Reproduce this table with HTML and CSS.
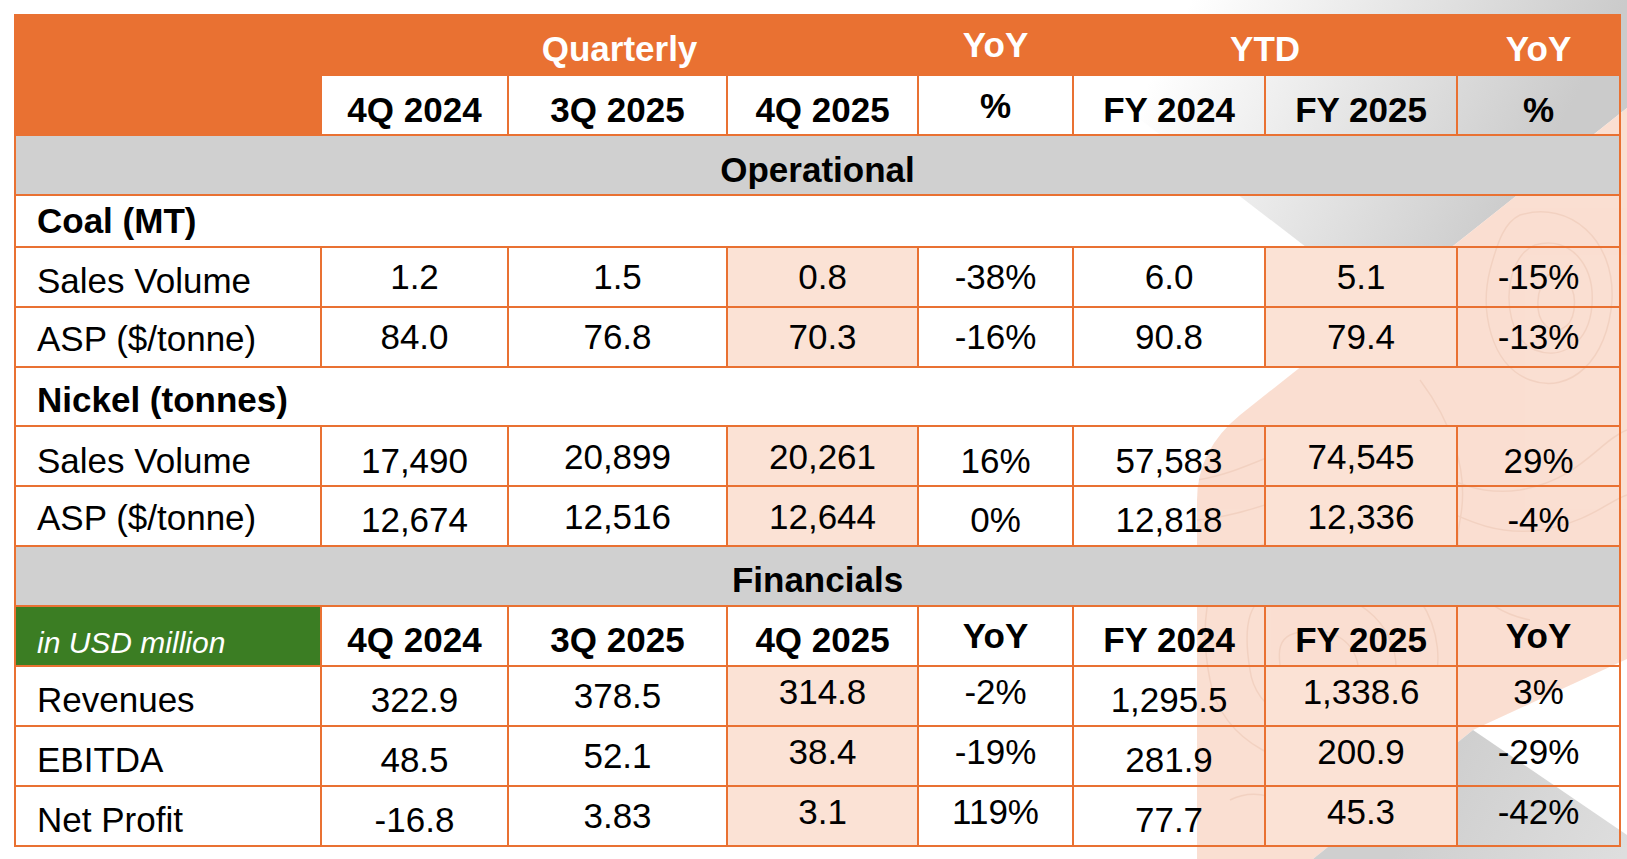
FILE: index.html
```html
<!DOCTYPE html>
<html lang="en">
<head>
<meta charset="utf-8">
<title>Operational and Financial Highlights</title>
<link rel="stylesheet" href="styles.css">
</head>
<body>
<div class="page">
  <svg class="deco" width="1627" height="859" viewBox="0 0 1627 859" aria-hidden="true">
    <defs>
      <linearGradient id="gTop" gradientUnits="userSpaceOnUse" x1="1160" y1="60" x2="1500" y2="240">
        <stop offset="0" stop-color="#ffffff"/>
        <stop offset="1" stop-color="#cbcbcb"/>
      </linearGradient>
      <linearGradient id="gBot" gradientUnits="userSpaceOnUse" x1="1450" y1="760" x2="1620" y2="859">
        <stop offset="0" stop-color="#cfcfcf"/>
        <stop offset="1" stop-color="#dedede"/>
      </linearGradient>
      <clipPath id="peachClip">
        <path d="M1627,108 L1240,415 Q1197,450 1197,500 L1197,859 L1313,859 L1473,730 L1627,659 Z"/>
      </clipPath>
    </defs>
    <polygon points="985,0 1627,0 1627,108 1380,304" fill="url(#gTop)"/>
    <path d="M1627,108 L1240,415 Q1197,450 1197,500 L1197,859 L1313,859 L1473,730 L1627,659 Z" fill="#FADFD2"/>
    <g clip-path="url(#peachClip)" fill="none" stroke="#E2B49C" stroke-width="1.5" opacity="0.3">
      <path d="M1520,215 C1570,200 1615,240 1612,300 C1608,360 1570,395 1530,380 C1490,365 1480,310 1490,270 C1498,240 1505,222 1520,215 Z"/>
      <path d="M1535,245 C1570,235 1595,265 1592,305 C1589,345 1560,360 1535,350 C1510,340 1505,300 1512,275 C1517,258 1525,249 1535,245 Z"/>
      <path d="M1548,275 C1565,270 1577,288 1574,310 C1571,330 1555,335 1545,325 C1535,315 1535,290 1548,275 Z"/>
      <path d="M1230,560 C1290,520 1380,540 1420,600 C1460,660 1430,740 1360,760 C1290,780 1220,740 1210,680 C1200,630 1205,580 1230,560 Z"/>
      <path d="M1260,600 C1300,580 1360,590 1385,630 C1410,670 1390,715 1345,725 C1300,735 1255,710 1250,670 C1245,640 1245,612 1260,600 Z"/>
      <path d="M1290,635 C1315,625 1345,632 1355,655 C1365,678 1350,695 1325,698 C1300,700 1282,685 1280,665 C1278,650 1280,640 1290,635 Z"/>
      <path d="M1197,480 C1260,470 1300,430 1360,440 C1420,450 1450,500 1520,490 C1580,480 1600,440 1627,430"/>
      <path d="M1197,520 C1260,515 1310,480 1370,485 C1430,490 1470,540 1540,530 C1590,522 1610,500 1627,495"/>
      <path d="M1420,380 C1450,420 1470,470 1460,520 C1450,570 1480,610 1530,620"/>
      <path d="M1230,800 C1270,780 1300,820 1340,810 C1380,800 1400,760 1440,770"/>
      <path d="M1480,560 C1520,540 1570,560 1590,600"/>
    </g>
    <polygon points="1473,730 1627,835 1627,859 1313,859" fill="url(#gBot)"/>
  </svg>

  <table class="kpi">
    <colgroup>
      <col class="c0"><col class="c1"><col class="c2"><col class="c3">
      <col class="c4"><col class="c5"><col class="c6"><col class="c7">
    </colgroup>
    <tr class="h1">
      <th class="corner" rowspan="2"></th>
      <th colspan="3" class="d4">Quarterly</th>
      <th>YoY</th>
      <th colspan="2" class="d4">YTD</th>
      <th class="d4">YoY</th>
    </tr>
    <tr class="h2">
      <th class="d5">4Q 2024</th>
      <th class="d5">3Q 2025</th>
      <th class="d5">4Q 2025</th>
      <th class="d1">%</th>
      <th class="d5">FY 2024</th>
      <th class="d5">FY 2025</th>
      <th class="d5">%</th>
    </tr>
    <tr class="sec">
      <td colspan="8" class="d5">Operational</td>
    </tr>
    <tr class="grp coal">
      <td colspan="8">Coal (MT)</td>
    </tr>
    <tr>
      <td class="lbl d4">Sales Volume</td>
      <td>1.2</td>
      <td>1.5</td>
      <td class="hl">0.8</td>
      <td>-38%</td>
      <td>6.0</td>
      <td class="hl">5.1</td>
      <td>-15%</td>
    </tr>
    <tr>
      <td class="lbl d2">ASP ($/tonne)</td>
      <td>84.0</td>
      <td>76.8</td>
      <td class="hl">70.3</td>
      <td>-16%</td>
      <td>90.8</td>
      <td class="hl">79.4</td>
      <td>-13%</td>
    </tr>
    <tr class="grp nickel">
      <td colspan="8" class="d4">Nickel (tonnes)</td>
    </tr>
    <tr>
      <td class="lbl d5">Sales Volume</td>
      <td class="d5">17,490</td>
      <td class="d1">20,899</td>
      <td class="hl d1">20,261</td>
      <td class="d5">16%</td>
      <td class="d5">57,583</td>
      <td class="hl d1">74,545</td>
      <td class="d5">29%</td>
    </tr>
    <tr>
      <td class="lbl d2">ASP ($/tonne)</td>
      <td class="d4">12,674</td>
      <td class="d1">12,516</td>
      <td class="hl d1">12,644</td>
      <td class="d4">0%</td>
      <td class="d4">12,818</td>
      <td class="hl d1">12,336</td>
      <td class="d4">-4%</td>
    </tr>
    <tr class="sec">
      <td colspan="8" class="d4">Financials</td>
    </tr>
    <tr class="h3">
      <th class="usd d7">in USD million</th>
      <th class="d4">4Q 2024</th>
      <th class="d4">3Q 2025</th>
      <th class="d4">4Q 2025</th>
      <th>YoY</th>
      <th class="d4">FY 2024</th>
      <th class="d4">FY 2025</th>
      <th>YoY</th>
    </tr>
    <tr>
      <td class="lbl d4">Revenues</td>
      <td class="d4">322.9</td>
      <td>378.5</td>
      <td class="hl u4">314.8</td>
      <td class="u4">-2%</td>
      <td class="d4">1,295.5</td>
      <td class="hl u4">1,338.6</td>
      <td class="u4">3%</td>
    </tr>
    <tr>
      <td class="lbl d4">EBITDA</td>
      <td class="d4">48.5</td>
      <td>52.1</td>
      <td class="hl u4">38.4</td>
      <td class="u4">-19%</td>
      <td class="d4">281.9</td>
      <td class="hl u4">200.9</td>
      <td class="u4">-29%</td>
    </tr>
    <tr>
      <td class="lbl d4">Net Profit</td>
      <td class="d4">-16.8</td>
      <td>3.83</td>
      <td class="hl u4">3.1</td>
      <td class="u4">119%</td>
      <td class="d4">77.7</td>
      <td class="hl u4">45.3</td>
      <td class="u4">-42%</td>
    </tr>
  </table>
</div>
</body>
</html>
```

FILE: styles.css
```css
* {
  box-sizing: border-box;
}

html,
body {
  margin: 0;
  padding: 0;
  background: #ffffff;
}

body {
  font-family: "Liberation Sans", Arial, sans-serif;
  color: #000000;
}

.page {
  position: relative;
  width: 1627px;
  height: 859px;
  overflow: hidden;
  padding: 14px 0 0 14px;
}

.deco {
  position: absolute;
  left: 0;
  top: 0;
}

.kpi {
  position: relative;
  border-collapse: collapse;
  table-layout: fixed;
  width: 1607px;
  font-size: 35px;
}

.c0 { width: 306px; }
.c1 { width: 187px; }
.c2 { width: 219px; }
.c3 { width: 191px; }
.c4 { width: 155px; }
.c5 { width: 192px; }
.c6 { width: 192px; }
.c7 { width: 163px; }

.kpi td,
.kpi th {
  border: 2px solid #E97132;
  padding: 0;
  height: 60px;
  text-align: center;
  vertical-align: middle;
  line-height: 1.15;
  white-space: nowrap;
  font-weight: 400;
}

.kpi th {
  font-weight: 700;
}

.kpi .h1 th {
  background: #E97132;
  color: #ffffff;
}

.kpi .corner {
  background: #E97132;
}

.kpi .sec td {
  background: #D0D0D0;
  font-weight: 700;
}

.kpi .grp td {
  text-align: left;
  font-weight: 700;
  padding-left: 21px;
}

.kpi .coal td {
  height: 52px;
}

.kpi .nickel td {
  height: 59px;
}

.kpi .lbl {
  text-align: left;
  padding-left: 21px;
}

.kpi .hl {
  background: #FBE2D5;
}

.kpi .usd {
  background: #3B7D23;
  color: #ffffff;
  font-style: italic;
  font-weight: 400;
  font-size: 30px;
  text-align: left;
  padding-left: 21px;
}

.kpi .d1 { padding-top: 3px; }
.kpi .d2 { padding-top: 4px; }
.kpi .d4 { padding-top: 8px; }
.kpi .d5 { padding-top: 10px; }
.kpi .d7 { padding-top: 14px; }
.kpi .u4 { padding-bottom: 8px; }
```
